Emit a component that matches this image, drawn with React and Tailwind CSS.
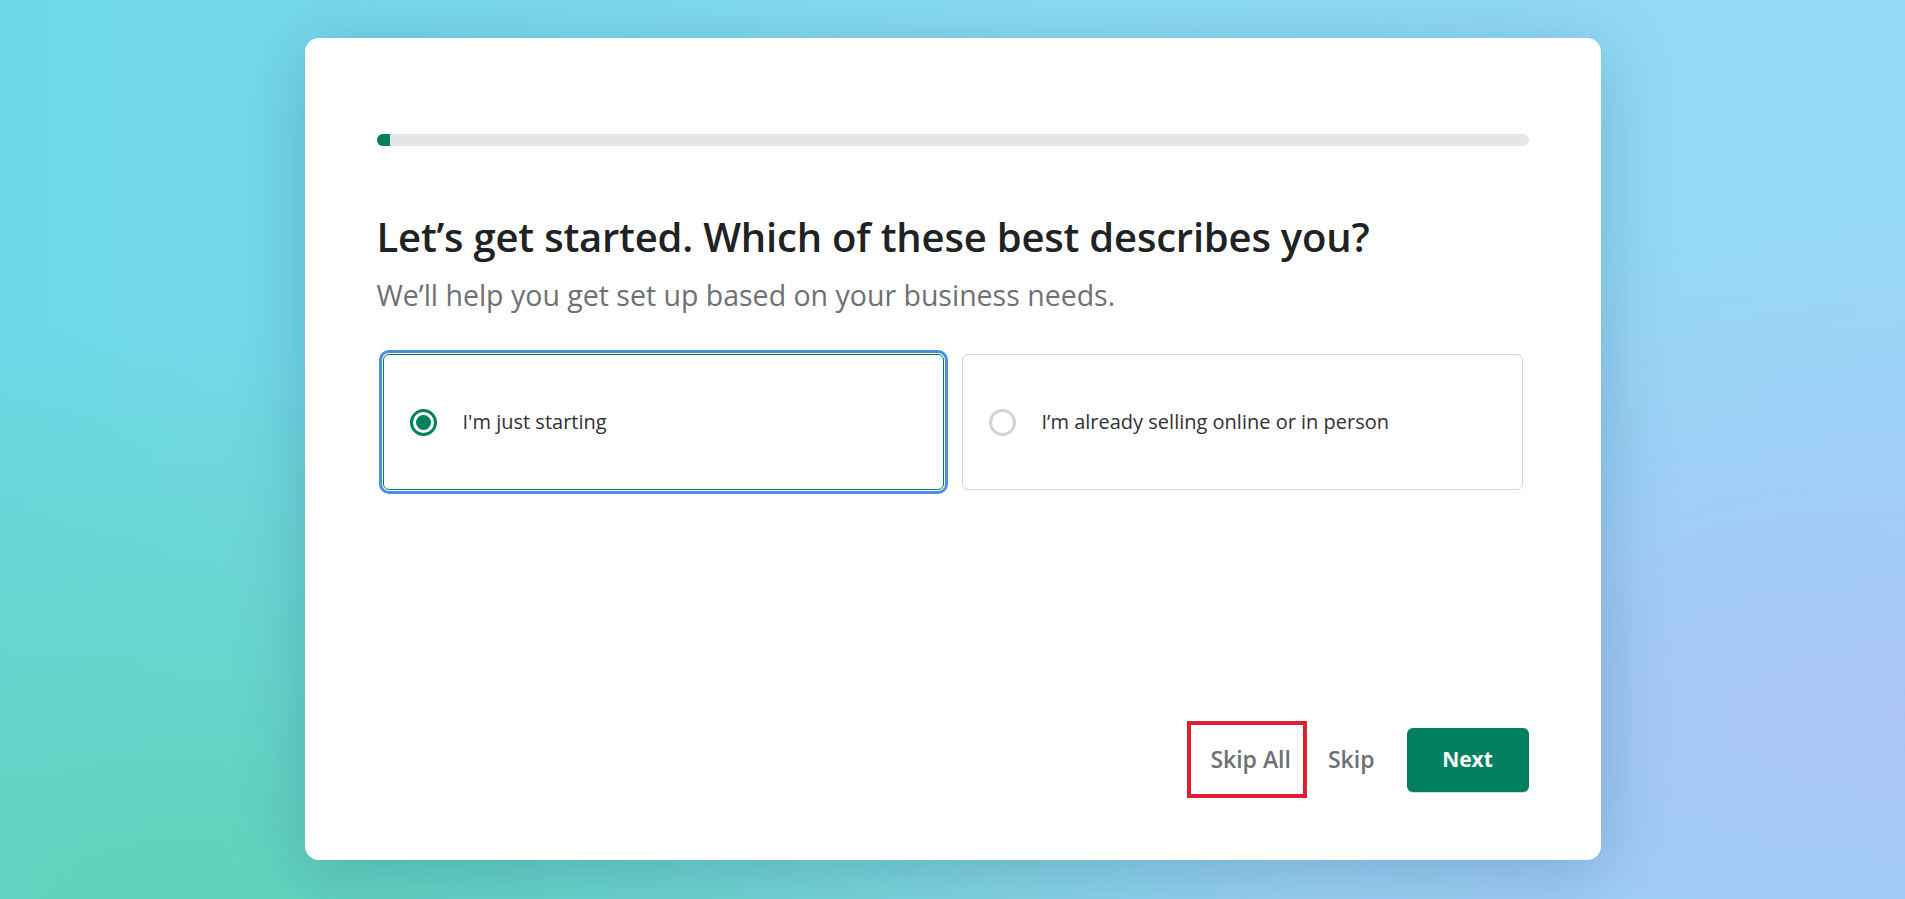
import { useState } from 'react';

const options = [
  { id: 'starting', label: "I'm just starting" },
  { id: 'selling', label: 'I’m already selling online or in person' },
];

function Radio({ checked }) {
  if (checked) {
    return (
      <span className="flex h-[27px] w-[27px] shrink-0 items-center justify-center rounded-full border-[3px] border-[#008060]">
        <span className="h-[15px] w-[15px] rounded-full bg-[#008060]" />
      </span>
    );
  }
  return <span className="h-[27px] w-[27px] shrink-0 rounded-full border-[3px] border-[#d2d4d6]" />;
}

export default function App() {
  const [selected, setSelected] = useState('starting');

  return (
    <div className="flex h-[899px] w-full items-start justify-center overflow-hidden bg-[radial-gradient(ellipse_at_10%_100%,#5fd3b9_0%,rgba(95,211,185,0)_45%),radial-gradient(ellipse_at_100%_80%,#aac4f7_0%,rgba(170,196,247,0)_50%),linear-gradient(90deg,#6cd8e6_0%,#8bdcf2_55%,#97d9f8_100%)] pt-[38px] font-['Open_Sans',sans-serif]">
      <div className="flex h-[822px] w-[1296px] flex-col rounded-[14px] bg-white px-[72px] pb-[62px] pt-[96px] shadow-[0_12px_70px_rgba(20,80,110,0.28)]">
        <div className="h-[12px] w-full overflow-hidden rounded-full bg-[#e3e5e7]">
          <div className="h-full w-[13px] bg-[#008060]" />
        </div>

        <h1 className="mt-[67px] text-[40px] font-semibold leading-[48px] tracking-[-0.2px] text-[#202223]">
          Let’s get started. Which of these best describes you?
        </h1>
        <p className="mt-[15px] text-[28.5px] leading-[38px] text-[#6d7175]">
          We’ll help you get set up based on your business needs.
        </p>

        <div className="mx-[6px] mt-[40px] grid grid-cols-2 gap-[18px]">
          {options.map((o) => {
            const on = selected === o.id;
            return (
              <button
                key={o.id}
                onClick={() => setSelected(o.id)}
                className={
                  on
                    ? 'flex h-[136px] items-center gap-[26px] rounded-[6px] border border-[#008060] px-[26px] text-left outline-[3px] outline-offset-[1px] outline-[#4a90e2] outline-solid'
                    : 'flex h-[136px] items-center gap-[26px] rounded-[6px] border border-[#d2d4d6] px-[26px] text-left'
                }
              >
                <Radio checked={on} />
                <span className="text-[20px] text-[#303235]">{o.label}</span>
              </button>
            );
          })}
        </div>

        <div className="mt-auto flex items-center justify-end">
          <div className="flex h-[77px] items-center border-4 border-[#e0202e] pl-[19px] pr-[12px]">
            <span className="text-[23px] font-semibold text-[#6d7175]">Skip All</span>
          </div>
          <button className="ml-[21px] text-[23px] font-semibold text-[#6d7175]">Skip</button>
          <button className="ml-[32px] h-[64px] w-[122px] rounded-[6px] bg-[#008060] text-[21px] font-bold text-white shadow-[0_1px_0_rgba(0,0,0,0.15)]">
            Next
          </button>
        </div>
      </div>
    </div>
  );
}
